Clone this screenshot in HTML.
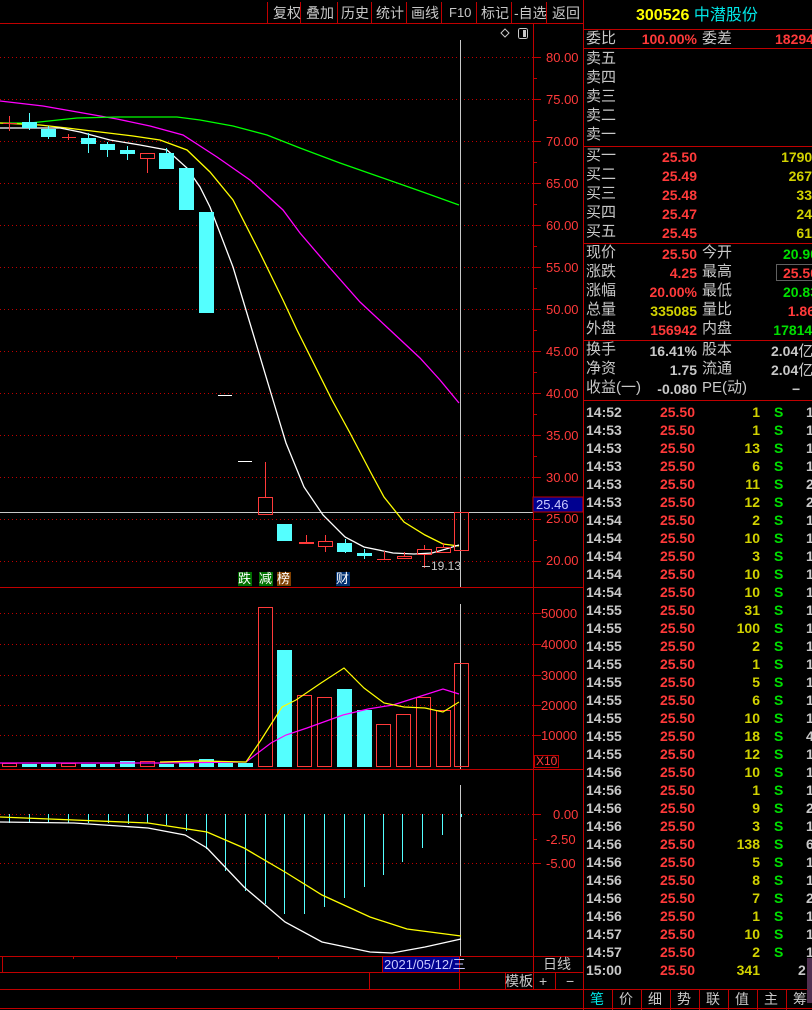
<!DOCTYPE html>
<html><head><meta charset="utf-8"><style>
*{margin:0;padding:0;box-sizing:border-box}
body{width:812px;height:1010px;background:#000;overflow:hidden;position:relative;font-family:"Liberation Sans","Noto Sans CJK SC",sans-serif;}
.t{position:absolute;white-space:nowrap;line-height:1;}
.g{color:#c8c8c8}.r{color:#ff3a3a}.y{color:#d2d200}.gr{color:#00e000}.c{color:#00e6e6}
.lb{font-size:15px;color:#c8c8c8}
.n{font-size:14px;font-weight:bold}
.ra{text-align:right}
</style></head><body>
<svg width="812" height="1010" style="position:absolute;left:0;top:0" shape-rendering="crispEdges">
<!-- toolbar -->
<line x1="0" y1="23.5" x2="584" y2="23.5" stroke="#c00000"/>
<g stroke="#c00000">
<line x1="267.5" y1="2" x2="267.5" y2="23"/><line x1="300.5" y1="2" x2="300.5" y2="23"/><line x1="337.5" y1="2" x2="337.5" y2="23"/><line x1="371.5" y1="2" x2="371.5" y2="23"/><line x1="406.5" y1="2" x2="406.5" y2="23"/><line x1="441.5" y1="2" x2="441.5" y2="23"/><line x1="476.5" y1="2" x2="476.5" y2="23"/><line x1="511.5" y1="2" x2="511.5" y2="23"/><line x1="546.5" y1="2" x2="546.5" y2="23"/>
</g>
<!-- main frame -->
<line x1="583.5" y1="0" x2="583.5" y2="1010" stroke="#c00000"/>
<line x1="533.5" y1="23" x2="533.5" y2="972" stroke="#c00000"/>
<line x1="0" y1="587.5" x2="584" y2="587.5" stroke="#c00000"/>
<line x1="0" y1="769.5" x2="584" y2="769.5" stroke="#c00000"/>
<line x1="0" y1="956.5" x2="584" y2="956.5" stroke="#c00000"/>
<line x1="0" y1="972.5" x2="584" y2="972.5" stroke="#c00000"/>
<line x1="0" y1="989.5" x2="584" y2="989.5" stroke="#c00000"/>
<line x1="0" y1="1008.5" x2="812" y2="1008.5" stroke="#c00000"/>
<line x1="459.5" y1="956" x2="459.5" y2="989" stroke="#c00000"/>
<line x1="382.5" y1="956" x2="382.5" y2="972" stroke="#c00000"/>
<line x1="2.5" y1="956" x2="2.5" y2="972" stroke="#c00000"/>
<line x1="369.5" y1="972" x2="369.5" y2="989" stroke="#c00000"/>
<line x1="505.5" y1="972" x2="505.5" y2="989" stroke="#c00000"/>
<line x1="533.5" y1="972" x2="533.5" y2="989" stroke="#c00000"/>
<line x1="555.5" y1="972" x2="555.5" y2="989" stroke="#c00000"/>
<!-- price grid -->
<g stroke="#c00000" stroke-dasharray="1,3">
<line x1="0" y1="57.5" x2="533" y2="57.5"/><line x1="0" y1="99.5" x2="533" y2="99.5"/><line x1="0" y1="141.5" x2="533" y2="141.5"/><line x1="0" y1="183.5" x2="533" y2="183.5"/><line x1="0" y1="225.5" x2="533" y2="225.5"/><line x1="0" y1="267.5" x2="533" y2="267.5"/><line x1="0" y1="309.5" x2="533" y2="309.5"/><line x1="0" y1="351.5" x2="533" y2="351.5"/><line x1="0" y1="393.5" x2="533" y2="393.5"/><line x1="0" y1="435.5" x2="533" y2="435.5"/><line x1="0" y1="477.5" x2="533" y2="477.5"/><line x1="0" y1="519.5" x2="533" y2="519.5"/><line x1="0" y1="561.5" x2="533" y2="561.5"/>
<line x1="0" y1="613.5" x2="533" y2="613.5"/><line x1="0" y1="644.5" x2="533" y2="644.5"/><line x1="0" y1="675.5" x2="533" y2="675.5"/><line x1="0" y1="705.5" x2="533" y2="705.5"/><line x1="0" y1="735.5" x2="533" y2="735.5"/>
<line x1="0" y1="814.5" x2="533" y2="814.5"/><line x1="0" y1="863.5" x2="533" y2="863.5"/>
</g>
<g stroke="#c00000">
<line x1="533" y1="57.5" x2="541" y2="57.5"/><line x1="533" y1="99.5" x2="541" y2="99.5"/><line x1="533" y1="141.5" x2="541" y2="141.5"/><line x1="533" y1="183.5" x2="541" y2="183.5"/><line x1="533" y1="225.5" x2="541" y2="225.5"/><line x1="533" y1="267.5" x2="541" y2="267.5"/><line x1="533" y1="309.5" x2="541" y2="309.5"/><line x1="533" y1="351.5" x2="541" y2="351.5"/><line x1="533" y1="393.5" x2="541" y2="393.5"/><line x1="533" y1="435.5" x2="541" y2="435.5"/><line x1="533" y1="477.5" x2="541" y2="477.5"/><line x1="533" y1="519.5" x2="541" y2="519.5"/><line x1="533" y1="561.5" x2="541" y2="561.5"/>
<line x1="533" y1="78.5" x2="537" y2="78.5"/><line x1="533" y1="120.5" x2="537" y2="120.5"/><line x1="533" y1="162.5" x2="537" y2="162.5"/><line x1="533" y1="204.5" x2="537" y2="204.5"/><line x1="533" y1="246.5" x2="537" y2="246.5"/><line x1="533" y1="288.5" x2="537" y2="288.5"/><line x1="533" y1="330.5" x2="537" y2="330.5"/><line x1="533" y1="372.5" x2="537" y2="372.5"/><line x1="533" y1="414.5" x2="537" y2="414.5"/><line x1="533" y1="456.5" x2="537" y2="456.5"/><line x1="533" y1="498.5" x2="537" y2="498.5"/><line x1="533" y1="540.5" x2="537" y2="540.5"/>
<line x1="533" y1="613.5" x2="541" y2="613.5"/><line x1="533" y1="644.5" x2="541" y2="644.5"/><line x1="533" y1="675.5" x2="541" y2="675.5"/><line x1="533" y1="705.5" x2="541" y2="705.5"/><line x1="533" y1="735.5" x2="541" y2="735.5"/>
<line x1="533" y1="814.5" x2="541" y2="814.5"/><line x1="533" y1="863.5" x2="541" y2="863.5"/><line x1="533" y1="839.5" x2="537" y2="839.5"/>
</g>
<rect x="534.5" y="755.5" width="24" height="12" fill="none" stroke="#c00000"/>
<!-- cursor lines -->
<line x1="460.5" y1="40" x2="460.5" y2="587" stroke="#c8c8c8"/>
<line x1="460.5" y1="604" x2="460.5" y2="769" stroke="#c8c8c8"/>
<line x1="460.5" y1="785" x2="460.5" y2="956" stroke="#c8c8c8"/>
<line x1="0" y1="512.5" x2="533" y2="512.5" stroke="#c8c8c8"/>
<rect x="533" y="497" width="50" height="15" fill="#000090" stroke="#c00000"/>
<!-- icons -->
<path d="M505 29 L509 33 L505 37 L501 33 Z" fill="none" stroke="#c8c8c8" shape-rendering="auto"/>
<rect x="518.5" y="28.5" width="9" height="10" rx="2" fill="none" stroke="#c8c8c8"/>
<rect x="523" y="30" width="3" height="7" fill="#c8c8c8"/>
<!-- MA lines -->
<g fill="none" stroke-width="1.3" shape-rendering="auto">
<polyline stroke="#ff00ff" points="0,101 43,106 83,113 117,119 150,126 183,135 217,157 250,180 283,210 300,233 330,268 360,302 390,330 420,358 440,380 459,403"/>
<polyline stroke="#00ff00" points="0,123 30,123 77,118 117,117 177,117 200,120 233,126 267,135 300,148 340,163 380,177 420,191 459,205"/>
<polyline stroke="#ffff00" points="0,123 40,125 67,128 100,132 133,136 160,140 187,150 210,172 233,200 260,253 283,300 297,330 332,400 350,433 371,473 384,497 404,522 425,535 443,544 459,546"/>
<polyline stroke="#ffffff" points="0,128 20,128 60,128 80,132 110,140 140,145 167,150 187,168 200,187 210,207 220,233 233,267 252,330 273,400 286,443 304,487 323,515 345,537 364,547 393,553 414,554 432,553 446,549 459,545"/>
</g>
<!-- candles -->
<g stroke="#ff3a3a" fill="none">
<line x1="9.5" y1="116" x2="9.5" y2="131"/><line x1="3" y1="123.5" x2="17" y2="123.5"/>
<line x1="68.5" y1="134" x2="68.5" y2="140"/><line x1="62" y1="137.5" x2="76" y2="137.5"/>
<rect x="140.5" y="153.5" width="14" height="5"/><line x1="147.5" y1="158" x2="147.5" y2="173"/>
<rect x="258.5" y="497.5" width="14" height="17"/><line x1="265.5" y1="462" x2="265.5" y2="497"/>
<line x1="306.5" y1="535" x2="306.5" y2="543"/><rect x="299" y="542" width="15" height="2" fill="#ff3a3a" stroke="none"/>
<rect x="318.5" y="541.5" width="14" height="5"/><line x1="325.5" y1="535" x2="325.5" y2="541"/><line x1="325.5" y1="546" x2="325.5" y2="552"/>
<line x1="384.5" y1="551" x2="384.5" y2="560"/><line x1="377" y1="559.5" x2="391" y2="559.5"/>
<rect x="397.5" y="556.5" width="14" height="2"/><line x1="404.5" y1="552" x2="404.5" y2="556"/>
<rect x="417.5" y="549.5" width="14" height="5"/><line x1="424.5" y1="545" x2="424.5" y2="549"/><line x1="424.5" y1="555" x2="424.5" y2="568"/>
<rect x="436.5" y="547.5" width="14" height="5"/><line x1="443.5" y1="543" x2="443.5" y2="547"/>
<rect x="454.5" y="512.5" width="14" height="38"/>
</g>
<g fill="#54ffff" stroke="#54ffff">
<line x1="29.5" y1="113" x2="29.5" y2="130"/><rect x="22" y="122" width="15" height="6" stroke="none"/>
<line x1="48.5" y1="126" x2="48.5" y2="139"/><rect x="41" y="129" width="15" height="8" stroke="none"/>
<line x1="88.5" y1="133" x2="88.5" y2="153"/><rect x="81" y="138" width="15" height="6" stroke="none"/>
<line x1="107.5" y1="142" x2="107.5" y2="157"/><rect x="100" y="144" width="15" height="6" stroke="none"/>
<line x1="127.5" y1="146" x2="127.5" y2="160"/><rect x="120" y="150" width="15" height="4" stroke="none"/>
<line x1="166.5" y1="148" x2="166.5" y2="169"/><rect x="159" y="153" width="15" height="16" stroke="none"/>
<rect x="179" y="168" width="15" height="42" stroke="none"/>
<rect x="199" y="212" width="15" height="101" stroke="none"/>
<rect x="277" y="524" width="15" height="17" stroke="none"/>
<line x1="345.5" y1="539" x2="345.5" y2="553"/><rect x="337" y="543" width="15" height="9" stroke="none"/>
<line x1="364.5" y1="549" x2="364.5" y2="559"/><rect x="357" y="553" width="15" height="3" stroke="none"/>
</g>
<line x1="218" y1="395.5" x2="232" y2="395.5" stroke="#fff"/>
<line x1="238" y1="461.5" x2="252" y2="461.5" stroke="#fff"/>
<line x1="422" y1="566.5" x2="430" y2="566.5" stroke="#c8c8c8"/>
<rect x="238" y="572" width="14" height="14" fill="#007000"/>
<rect x="259" y="572" width="14" height="14" fill="#007000"/>
<rect x="277" y="572" width="14" height="14" fill="#804000"/>
<rect x="336" y="572" width="14" height="14" fill="#003070"/>
<!-- volume -->
<g stroke="#ff3a3a" fill="none">
<rect x="2.5" y="763.5" width="14" height="3"/><rect x="61.5" y="763.5" width="14" height="3"/><rect x="140.5" y="761.5" width="14" height="5"/>
<rect x="258.5" y="607.5" width="14" height="159"/><rect x="297.5" y="695.5" width="14" height="71"/><rect x="317.5" y="697.5" width="14" height="69"/><rect x="376.5" y="724.5" width="14" height="42"/><rect x="396.5" y="714.5" width="14" height="52"/><rect x="416.5" y="697.5" width="14" height="69"/><rect x="436.5" y="710.5" width="14" height="56"/><rect x="454.5" y="663.5" width="14" height="103"/>
</g>
<g fill="#54ffff">
<rect x="22" y="764" width="15" height="3"/><rect x="41" y="764" width="15" height="3"/><rect x="81" y="764" width="15" height="3"/><rect x="100" y="764" width="15" height="3"/><rect x="120" y="761" width="15" height="6"/><rect x="159" y="764" width="15" height="3"/><rect x="179" y="763" width="15" height="4"/><rect x="199" y="759" width="15" height="8"/><rect x="218" y="763" width="15" height="4"/><rect x="238" y="763" width="15" height="4"/>
<rect x="277" y="650" width="15" height="117"/><rect x="337" y="689" width="15" height="78"/><rect x="357" y="710" width="15" height="57"/>
</g>
<g fill="none" stroke-width="1.2" shape-rendering="auto">
<polyline stroke="#ff00ff" points="0,763 160,763 246,762 271,743 286,735 307,728 343,715 368,709 393,705 418,697 443,689 459,694"/>
<polyline stroke="#ffff00" points="160,762 200,761 246,762 261,740 282,707 296,700 321,683 344,668 364,688 384,703 404,707 425,708 443,712 459,702"/>
</g>
<!-- MACD -->
<g stroke="#54ffff">
<line x1="9.5" y1="814" x2="9.5" y2="823"/><line x1="29.5" y1="814" x2="29.5" y2="823"/><line x1="48.5" y1="814" x2="48.5" y2="823"/><line x1="68.5" y1="814" x2="68.5" y2="823"/><line x1="88.5" y1="814" x2="88.5" y2="823"/><line x1="108.5" y1="814" x2="108.5" y2="823"/><line x1="128.5" y1="814" x2="128.5" y2="824"/><line x1="147.5" y1="814" x2="147.5" y2="823"/><line x1="166.5" y1="814" x2="166.5" y2="825"/><line x1="186.5" y1="814" x2="186.5" y2="831"/><line x1="206.5" y1="814" x2="206.5" y2="849"/><line x1="225.5" y1="814" x2="225.5" y2="871"/><line x1="245.5" y1="814" x2="245.5" y2="891"/><line x1="265.5" y1="814" x2="265.5" y2="904"/><line x1="284.5" y1="814" x2="284.5" y2="914"/><line x1="304.5" y1="814" x2="304.5" y2="914"/><line x1="324.5" y1="814" x2="324.5" y2="907"/><line x1="344.5" y1="814" x2="344.5" y2="898"/><line x1="364.5" y1="814" x2="364.5" y2="887"/><line x1="383.5" y1="814" x2="383.5" y2="875"/><line x1="402.5" y1="814" x2="402.5" y2="862"/><line x1="422.5" y1="814" x2="422.5" y2="848"/><line x1="442.5" y1="814" x2="442.5" y2="835"/><line x1="461.5" y1="814" x2="461.5" y2="817"/>
</g>
<g fill="none" stroke-width="1.3" shape-rendering="auto">
<polyline stroke="#ffff00" points="0,817 74,820 148,823 207,832 244,848 285,872 322,895 370,917 407,929 461,936"/>
<polyline stroke="#ffffff" points="0,822 74,823 148,828 185,835 207,848 244,887 285,922 322,942 370,952 392,953 425,947 461,939"/>
</g>
<line x1="73.5" y1="956" x2="73.5" y2="959" stroke="#c00000"/><line x1="176.5" y1="956" x2="176.5" y2="959" stroke="#c00000"/><line x1="278.5" y1="956" x2="278.5" y2="959" stroke="#c00000"/>
<rect x="383" y="957" width="76" height="15" fill="#000090"/>
<!-- right panel lines -->
<g stroke="#c00000">
<line x1="584" y1="29.5" x2="812" y2="29.5"/><line x1="584" y1="48.5" x2="812" y2="48.5"/><line x1="584" y1="146.5" x2="812" y2="146.5"/><line x1="584" y1="243.5" x2="812" y2="243.5"/><line x1="584" y1="340.5" x2="812" y2="340.5"/><line x1="584" y1="400.5" x2="812" y2="400.5"/><line x1="584" y1="989.5" x2="812" y2="989.5"/>
<line x1="612.5" y1="989" x2="612.5" y2="1010"/><line x1="641.5" y1="989" x2="641.5" y2="1010"/><line x1="670.5" y1="989" x2="670.5" y2="1010"/><line x1="699.5" y1="989" x2="699.5" y2="1010"/><line x1="728.5" y1="989" x2="728.5" y2="1010"/><line x1="757.5" y1="989" x2="757.5" y2="1010"/><line x1="786.5" y1="989" x2="786.5" y2="1010"/>
</g>
<rect x="776.5" y="264.5" width="36" height="16" fill="none" stroke="#606060"/>
<rect x="807" y="958" width="5" height="45" fill="#503050"/>
</svg>

<!-- toolbar text -->
<div class="t lb" style="left:273px;top:6px;font-size:14px">复权</div>
<div class="t lb" style="left:306px;top:6px;font-size:14px">叠加</div>
<div class="t lb" style="left:341px;top:6px;font-size:14px">历史</div>
<div class="t lb" style="left:376px;top:6px;font-size:14px">统计</div>
<div class="t lb" style="left:411px;top:6px;font-size:14px">画线</div>
<div class="t lb" style="left:449px;top:6px;font-size:13px">F10</div>
<div class="t lb" style="left:481px;top:6px;font-size:14px">标记</div>
<div class="t lb" style="left:514px;top:6px;font-size:14px">-自选</div>
<div class="t lb" style="left:552px;top:6px;font-size:14px">返回</div>

<!-- price labels -->
<div style="position:absolute;left:540px;top:0;width:40px;font-size:13px;color:#ff3a3a;">
<div class="t" style="top:51px;left:6px">80.00</div><div class="t" style="top:93px;left:6px">75.00</div><div class="t" style="top:135px;left:6px">70.00</div><div class="t" style="top:177px;left:6px">65.00</div><div class="t" style="top:219px;left:6px">60.00</div><div class="t" style="top:261px;left:6px">55.00</div><div class="t" style="top:303px;left:6px">50.00</div><div class="t" style="top:345px;left:6px">45.00</div><div class="t" style="top:387px;left:6px">40.00</div><div class="t" style="top:429px;left:6px">35.00</div><div class="t" style="top:471px;left:6px">30.00</div><div class="t" style="top:512px;left:6px">25.00</div><div class="t" style="top:554px;left:6px">20.00</div>
<div class="t" style="top:607px;left:1px">50000</div><div class="t" style="top:638px;left:1px">40000</div><div class="t" style="top:669px;left:1px">30000</div><div class="t" style="top:699px;left:1px">20000</div><div class="t" style="top:729px;left:1px">10000</div>
<div class="t" style="top:808px;left:13px">0.00</div><div class="t" style="top:833px;left:6px">-2.50</div><div class="t" style="top:857px;left:6px">-5.00</div>
</div>
<div class="t" style="left:536px;top:498px;font-size:13px;color:#c8c8ff">25.46</div>
<div class="t" style="left:536px;top:755px;font-size:12px;color:#ff3a3a">X10</div>
<div class="t" style="left:431px;top:560px;font-size:12px;color:#c8c8c8">19.13</div>
<div class="t" style="left:238px;top:572px;font-size:13px;color:#fff">跌</div>
<div class="t" style="left:259px;top:572px;font-size:13px;color:#fff">减</div>
<div class="t" style="left:277px;top:572px;font-size:13px;color:#fff">榜</div>
<div class="t" style="left:336px;top:572px;font-size:13px;color:#fff">财</div>
<div class="t" style="left:384px;top:958px;font-size:13px;color:#c8c8ff">2021/05/12/三</div>
<div class="t lb" style="left:543px;top:957px;font-size:14px">日线</div>
<div class="t lb" style="left:505px;top:974px;font-size:14px">模板</div>
<div class="t lb" style="left:539px;top:974px;font-size:14px">+</div>
<div class="t lb" style="left:566px;top:974px;font-size:14px">−</div>

<!-- right panel -->
<div class="t" style="left:636px;top:8px;font-size:16px;font-weight:bold;color:#ffff00">300526 <span style="color:#00e6e6;font-weight:normal">中潜股份</span></div>
<div class="t lb" style="left:586px;top:31px">委比</div>
<div class="t n r" style="left:614px;top:32px;width:83px;text-align:right">100.00%</div>
<div class="t lb" style="left:702px;top:31px">委差</div>
<div class="t n r" style="left:775px;top:32px">18294</div>
<div class="t lb" style="left:586px;top:51px">卖五</div>
<div class="t lb" style="left:586px;top:70px">卖四</div>
<div class="t lb" style="left:586px;top:89px">卖三</div>
<div class="t lb" style="left:586px;top:108px">卖二</div>
<div class="t lb" style="left:586px;top:127px">卖一</div>

<div class="t lb" style="left:586px;top:148px">买一</div><div class="t n r ra" style="left:630px;top:150px;width:67px">25.50</div><div class="t n y ra" style="left:730px;top:150px;width:90px">17909</div>
<div class="t lb" style="left:586px;top:167px">买二</div><div class="t n r ra" style="left:630px;top:169px;width:67px">25.49</div><div class="t n y ra" style="left:730px;top:169px;width:82px">267</div>
<div class="t lb" style="left:586px;top:186px">买三</div><div class="t n r ra" style="left:630px;top:188px;width:67px">25.48</div><div class="t n y ra" style="left:730px;top:188px;width:82px">33</div>
<div class="t lb" style="left:586px;top:205px">买四</div><div class="t n r ra" style="left:630px;top:207px;width:67px">25.47</div><div class="t n y ra" style="left:730px;top:207px;width:82px">24</div>
<div class="t lb" style="left:586px;top:224px">买五</div><div class="t n r ra" style="left:630px;top:226px;width:67px">25.45</div><div class="t n y ra" style="left:730px;top:226px;width:82px">61</div>

<div class="t lb" style="left:586px;top:245px">现价</div><div class="t n r ra" style="left:630px;top:247px;width:67px">25.50</div><div class="t lb" style="left:702px;top:245px">今开</div><div class="t n gr ra" style="left:730px;top:247px;width:88px">20.90</div>
<div class="t lb" style="left:586px;top:264px">涨跌</div><div class="t n r ra" style="left:630px;top:266px;width:67px">4.25</div><div class="t lb" style="left:702px;top:264px">最高</div><div class="t n r ra" style="left:730px;top:266px;width:88px">25.50</div>
<div class="t lb" style="left:586px;top:283px">涨幅</div><div class="t n r ra" style="left:610px;top:285px;width:87px">20.00%</div><div class="t lb" style="left:702px;top:283px">最低</div><div class="t n gr ra" style="left:730px;top:285px;width:88px">20.83</div>
<div class="t lb" style="left:586px;top:302px">总量</div><div class="t n y ra" style="left:610px;top:304px;width:87px">335085</div><div class="t lb" style="left:702px;top:302px">量比</div><div class="t n r ra" style="left:730px;top:304px;width:85px">1.86</div>
<div class="t lb" style="left:586px;top:321px">外盘</div><div class="t n r ra" style="left:610px;top:323px;width:87px">156942</div><div class="t lb" style="left:702px;top:321px">内盘</div><div class="t n gr ra" style="left:730px;top:323px;width:90px">178143</div>

<div class="t lb" style="left:586px;top:342px">换手</div><div class="t n g ra" style="left:610px;top:344px;width:87px">16.41%</div><div class="t lb" style="left:702px;top:342px">股本</div><div class="t n g" style="left:771px;top:344px">2.04<span style="font-weight:normal;font-size:15px">亿</span></div>
<div class="t lb" style="left:586px;top:361px">净资</div><div class="t n g ra" style="left:610px;top:363px;width:87px">1.75</div><div class="t lb" style="left:702px;top:361px">流通</div><div class="t n g" style="left:771px;top:363px">2.04<span style="font-weight:normal;font-size:15px">亿</span></div>
<div class="t lb" style="left:586px;top:380px">收益(一)</div><div class="t n g ra" style="left:610px;top:382px;width:87px">-0.080</div><div class="t lb" style="left:702px;top:380px">PE(动)</div><div class="t n g" style="left:792px;top:382px">−</div>

<div id="tr"></div>
<div class="t" style="left:590px;top:992px;font-size:14px;color:#00e6e6">笔</div>
<div class="t lb" style="left:619px;top:992px;font-size:14px">价</div>
<div class="t lb" style="left:648px;top:992px;font-size:14px">细</div>
<div class="t lb" style="left:677px;top:992px;font-size:14px">势</div>
<div class="t lb" style="left:706px;top:992px;font-size:14px">联</div>
<div class="t lb" style="left:735px;top:992px;font-size:14px">值</div>
<div class="t lb" style="left:764px;top:992px;font-size:14px">主</div>
<div class="t lb" style="left:793px;top:992px;font-size:14px">筹</div>

<div style="position:absolute;left:0;top:0">
<div class="t n g" style="left:586px;top:405px">14:52</div><div class="t n r ra" style="left:630px;top:405px;width:65px">25.50</div><div class="t n y ra" style="left:720px;top:405px;width:40px">1</div><div class="t n gr" style="left:774px;top:405px">S</div><div class="t n g" style="left:806px;top:405px">1</div>
<div class="t n g" style="left:586px;top:423px">14:53</div><div class="t n r ra" style="left:630px;top:423px;width:65px">25.50</div><div class="t n y ra" style="left:720px;top:423px;width:40px">1</div><div class="t n gr" style="left:774px;top:423px">S</div><div class="t n g" style="left:806px;top:423px">1</div>
<div class="t n g" style="left:586px;top:441px">14:53</div><div class="t n r ra" style="left:630px;top:441px;width:65px">25.50</div><div class="t n y ra" style="left:720px;top:441px;width:40px">13</div><div class="t n gr" style="left:774px;top:441px">S</div><div class="t n g" style="left:806px;top:441px">1</div>
<div class="t n g" style="left:586px;top:459px">14:53</div><div class="t n r ra" style="left:630px;top:459px;width:65px">25.50</div><div class="t n y ra" style="left:720px;top:459px;width:40px">6</div><div class="t n gr" style="left:774px;top:459px">S</div><div class="t n g" style="left:806px;top:459px">1</div>
<div class="t n g" style="left:586px;top:477px">14:53</div><div class="t n r ra" style="left:630px;top:477px;width:65px">25.50</div><div class="t n y ra" style="left:720px;top:477px;width:40px">11</div><div class="t n gr" style="left:774px;top:477px">S</div><div class="t n g" style="left:806px;top:477px">2</div>
<div class="t n g" style="left:586px;top:495px">14:53</div><div class="t n r ra" style="left:630px;top:495px;width:65px">25.50</div><div class="t n y ra" style="left:720px;top:495px;width:40px">12</div><div class="t n gr" style="left:774px;top:495px">S</div><div class="t n g" style="left:806px;top:495px">2</div>
<div class="t n g" style="left:586px;top:513px">14:54</div><div class="t n r ra" style="left:630px;top:513px;width:65px">25.50</div><div class="t n y ra" style="left:720px;top:513px;width:40px">2</div><div class="t n gr" style="left:774px;top:513px">S</div><div class="t n g" style="left:806px;top:513px">1</div>
<div class="t n g" style="left:586px;top:531px">14:54</div><div class="t n r ra" style="left:630px;top:531px;width:65px">25.50</div><div class="t n y ra" style="left:720px;top:531px;width:40px">10</div><div class="t n gr" style="left:774px;top:531px">S</div><div class="t n g" style="left:806px;top:531px">1</div>
<div class="t n g" style="left:586px;top:549px">14:54</div><div class="t n r ra" style="left:630px;top:549px;width:65px">25.50</div><div class="t n y ra" style="left:720px;top:549px;width:40px">3</div><div class="t n gr" style="left:774px;top:549px">S</div><div class="t n g" style="left:806px;top:549px">1</div>
<div class="t n g" style="left:586px;top:567px">14:54</div><div class="t n r ra" style="left:630px;top:567px;width:65px">25.50</div><div class="t n y ra" style="left:720px;top:567px;width:40px">10</div><div class="t n gr" style="left:774px;top:567px">S</div><div class="t n g" style="left:806px;top:567px">1</div>
<div class="t n g" style="left:586px;top:585px">14:54</div><div class="t n r ra" style="left:630px;top:585px;width:65px">25.50</div><div class="t n y ra" style="left:720px;top:585px;width:40px">10</div><div class="t n gr" style="left:774px;top:585px">S</div><div class="t n g" style="left:806px;top:585px">1</div>
<div class="t n g" style="left:586px;top:603px">14:55</div><div class="t n r ra" style="left:630px;top:603px;width:65px">25.50</div><div class="t n y ra" style="left:720px;top:603px;width:40px">31</div><div class="t n gr" style="left:774px;top:603px">S</div><div class="t n g" style="left:806px;top:603px">1</div>
<div class="t n g" style="left:586px;top:621px">14:55</div><div class="t n r ra" style="left:630px;top:621px;width:65px">25.50</div><div class="t n y ra" style="left:720px;top:621px;width:40px">100</div><div class="t n gr" style="left:774px;top:621px">S</div><div class="t n g" style="left:806px;top:621px">1</div>
<div class="t n g" style="left:586px;top:639px">14:55</div><div class="t n r ra" style="left:630px;top:639px;width:65px">25.50</div><div class="t n y ra" style="left:720px;top:639px;width:40px">2</div><div class="t n gr" style="left:774px;top:639px">S</div><div class="t n g" style="left:806px;top:639px">1</div>
<div class="t n g" style="left:586px;top:657px">14:55</div><div class="t n r ra" style="left:630px;top:657px;width:65px">25.50</div><div class="t n y ra" style="left:720px;top:657px;width:40px">1</div><div class="t n gr" style="left:774px;top:657px">S</div><div class="t n g" style="left:806px;top:657px">1</div>
<div class="t n g" style="left:586px;top:675px">14:55</div><div class="t n r ra" style="left:630px;top:675px;width:65px">25.50</div><div class="t n y ra" style="left:720px;top:675px;width:40px">5</div><div class="t n gr" style="left:774px;top:675px">S</div><div class="t n g" style="left:806px;top:675px">1</div>
<div class="t n g" style="left:586px;top:693px">14:55</div><div class="t n r ra" style="left:630px;top:693px;width:65px">25.50</div><div class="t n y ra" style="left:720px;top:693px;width:40px">6</div><div class="t n gr" style="left:774px;top:693px">S</div><div class="t n g" style="left:806px;top:693px">1</div>
<div class="t n g" style="left:586px;top:711px">14:55</div><div class="t n r ra" style="left:630px;top:711px;width:65px">25.50</div><div class="t n y ra" style="left:720px;top:711px;width:40px">10</div><div class="t n gr" style="left:774px;top:711px">S</div><div class="t n g" style="left:806px;top:711px">1</div>
<div class="t n g" style="left:586px;top:729px">14:55</div><div class="t n r ra" style="left:630px;top:729px;width:65px">25.50</div><div class="t n y ra" style="left:720px;top:729px;width:40px">18</div><div class="t n gr" style="left:774px;top:729px">S</div><div class="t n g" style="left:806px;top:729px">4</div>
<div class="t n g" style="left:586px;top:747px">14:55</div><div class="t n r ra" style="left:630px;top:747px;width:65px">25.50</div><div class="t n y ra" style="left:720px;top:747px;width:40px">12</div><div class="t n gr" style="left:774px;top:747px">S</div><div class="t n g" style="left:806px;top:747px">1</div>
<div class="t n g" style="left:586px;top:765px">14:56</div><div class="t n r ra" style="left:630px;top:765px;width:65px">25.50</div><div class="t n y ra" style="left:720px;top:765px;width:40px">10</div><div class="t n gr" style="left:774px;top:765px">S</div><div class="t n g" style="left:806px;top:765px">1</div>
<div class="t n g" style="left:586px;top:783px">14:56</div><div class="t n r ra" style="left:630px;top:783px;width:65px">25.50</div><div class="t n y ra" style="left:720px;top:783px;width:40px">1</div><div class="t n gr" style="left:774px;top:783px">S</div><div class="t n g" style="left:806px;top:783px">1</div>
<div class="t n g" style="left:586px;top:801px">14:56</div><div class="t n r ra" style="left:630px;top:801px;width:65px">25.50</div><div class="t n y ra" style="left:720px;top:801px;width:40px">9</div><div class="t n gr" style="left:774px;top:801px">S</div><div class="t n g" style="left:806px;top:801px">2</div>
<div class="t n g" style="left:586px;top:819px">14:56</div><div class="t n r ra" style="left:630px;top:819px;width:65px">25.50</div><div class="t n y ra" style="left:720px;top:819px;width:40px">3</div><div class="t n gr" style="left:774px;top:819px">S</div><div class="t n g" style="left:806px;top:819px">1</div>
<div class="t n g" style="left:586px;top:837px">14:56</div><div class="t n r ra" style="left:630px;top:837px;width:65px">25.50</div><div class="t n y ra" style="left:720px;top:837px;width:40px">138</div><div class="t n gr" style="left:774px;top:837px">S</div><div class="t n g" style="left:806px;top:837px">6</div>
<div class="t n g" style="left:586px;top:855px">14:56</div><div class="t n r ra" style="left:630px;top:855px;width:65px">25.50</div><div class="t n y ra" style="left:720px;top:855px;width:40px">5</div><div class="t n gr" style="left:774px;top:855px">S</div><div class="t n g" style="left:806px;top:855px">1</div>
<div class="t n g" style="left:586px;top:873px">14:56</div><div class="t n r ra" style="left:630px;top:873px;width:65px">25.50</div><div class="t n y ra" style="left:720px;top:873px;width:40px">8</div><div class="t n gr" style="left:774px;top:873px">S</div><div class="t n g" style="left:806px;top:873px">1</div>
<div class="t n g" style="left:586px;top:891px">14:56</div><div class="t n r ra" style="left:630px;top:891px;width:65px">25.50</div><div class="t n y ra" style="left:720px;top:891px;width:40px">7</div><div class="t n gr" style="left:774px;top:891px">S</div><div class="t n g" style="left:806px;top:891px">2</div>
<div class="t n g" style="left:586px;top:909px">14:56</div><div class="t n r ra" style="left:630px;top:909px;width:65px">25.50</div><div class="t n y ra" style="left:720px;top:909px;width:40px">1</div><div class="t n gr" style="left:774px;top:909px">S</div><div class="t n g" style="left:806px;top:909px">1</div>
<div class="t n g" style="left:586px;top:927px">14:57</div><div class="t n r ra" style="left:630px;top:927px;width:65px">25.50</div><div class="t n y ra" style="left:720px;top:927px;width:40px">10</div><div class="t n gr" style="left:774px;top:927px">S</div><div class="t n g" style="left:806px;top:927px">1</div>
<div class="t n g" style="left:586px;top:945px">14:57</div><div class="t n r ra" style="left:630px;top:945px;width:65px">25.50</div><div class="t n y ra" style="left:720px;top:945px;width:40px">2</div><div class="t n gr" style="left:774px;top:945px">S</div><div class="t n g" style="left:806px;top:945px">1</div>
<div class="t n g" style="left:586px;top:963px">15:00</div><div class="t n r ra" style="left:630px;top:963px;width:65px">25.50</div><div class="t n y ra" style="left:720px;top:963px;width:40px">341</div><div class="t n g" style="left:798px;top:963px">2</div>
</div>
</body></html>
